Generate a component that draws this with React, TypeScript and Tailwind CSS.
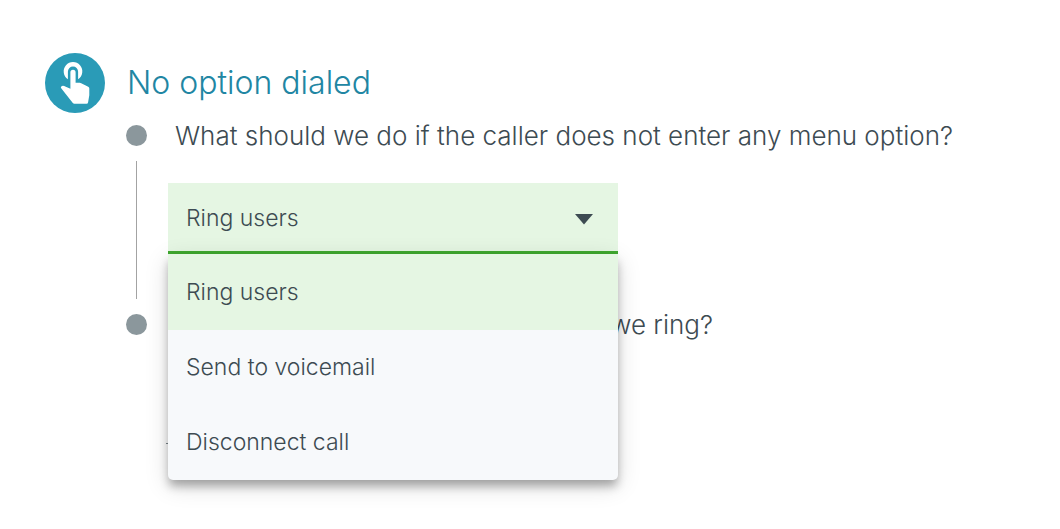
import { useState } from "react";

const options = ["Ring users", "Send to voicemail", "Disconnect call"];

function TouchIcon() {
  return (
    <svg className="h-[60px] w-[60px] shrink-0" viewBox="0 0 60 60" aria-hidden="true">
      <circle cx="30" cy="30" r="30" fill="#2a9bb7" />
      <path
        d="M22.9 26.2V18.6a5.1 5.1 0 0 1 10.2 0v7.6a9.3 9.3 0 1 0-10.2 0Z"
        fill="#fff"
      />
      <path
        d="M25.4 19.4a2.6 2.6 0 0 1 5.2 0V29.8h4.2q.8 0 1.4.4l7 3.6q1.2.6 1.1 1.8v6.6l-1.2 7q-.2 1.6-1.6 1.6H29.4q-1 0-1.6-.8L16.2 35.2q-.8-1 .1-1.8 1-1 2.8-.5l6.3 2.9Z"
        fill="#fff"
      />
    </svg>
  );
}

export default function App() {
  const [selected, setSelected] = useState(options[0]);

  return (
    <main className="min-h-screen bg-white pt-[53px] pr-6 pl-[45px] font-['Inter',sans-serif] font-light text-[#3d4b52]">
      <header className="flex items-center gap-[22px]">
        <TouchIcon />
        <h1 className="text-[32px] leading-[60px] text-[#2186a3]">No option dialed</h1>
      </header>

      <ol className="pl-[81px]">
        <li className="flex gap-[21px]">
          <div className="flex w-[21px] shrink-0 flex-col items-center pt-3">
            <span className="h-[21px] w-[21px] rounded-full bg-[#8b979c]" />
            <span className="mt-[15px] h-[138px] w-px bg-[#a3a3a3]" />
          </div>
          <div className="min-w-0 grow">
            <label htmlFor="action" className="block pl-[7px] text-[26px] leading-[45px] whitespace-nowrap">
              What should we do if the caller does not enter any menu option?
            </label>
            <div className="relative mt-[25px] w-full max-w-[450px]">
              <select
                id="action"
                value={selected}
                onChange={(event) => setSelected(event.target.value)}
                className="block h-[71px] w-full appearance-none rounded-none border-b-[3px] border-[#3fa82f] bg-[#e5f6e3] pt-[2px] pr-14 pl-[18px] text-[23px] outline-none"
              >
                {options.map((option) => (
                  <option key={option}>{option}</option>
                ))}
              </select>
              <svg
                className="pointer-events-none absolute top-[31px] right-[25px] h-[11px] w-[18px]"
                viewBox="0 0 18 11"
                aria-hidden="true"
              >
                <path d="M0 0H18L9 10.5Z" fill="#3d4b52" />
              </svg>
              <div
                role="listbox"
                aria-label="Action"
                className="absolute top-full left-0 z-10 w-full overflow-hidden rounded-b-[5px] bg-[#f7f9fb] shadow-[0_7px_10px_-1px_rgba(0,0,0,0.3),0_6px_24px_rgba(0,0,0,0.14)]"
              >
                {options.map((option) => (
                  <button
                    key={option}
                    type="button"
                    role="option"
                    aria-selected={option === selected}
                    onClick={() => setSelected(option)}
                    className="block h-[75px] w-full px-[18px] text-left text-[23px] first:h-[76px] aria-selected:bg-[#e5f6e3]"
                  >
                    {option}
                  </button>
                ))}
              </div>
            </div>
          </div>
        </li>
        <li className="mt-[15px] flex gap-[19px]">
          <span className="h-[21px] w-[21px] shrink-0 rounded-full bg-[#8b979c]" />
          <div className="min-w-0 grow">
            <p className="max-w-[547px] text-right text-[26px] leading-[22px]">we ring?</p>
            <div className="mt-[88px] h-5 max-w-[400px] border-b border-[#7c888d]" />
          </div>
        </li>
      </ol>
    </main>
  );
}
